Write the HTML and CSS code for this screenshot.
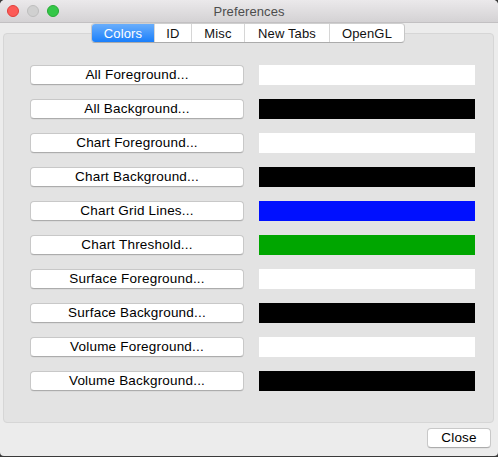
FILE: index.html
```html
<!DOCTYPE html>
<html>
<head>
<meta charset="utf-8">
<link rel="stylesheet" href="styles.css">
</head>
<body>
<div class="window">
  <div class="titlebar">
    <div class="lights">
      <span class="light red"></span>
      <span class="light gray"></span>
      <span class="light green"></span>
    </div>
    <div class="title">Preferences</div>
  </div>
  <div class="body">
    <div class="tabs">
      <span class="tab active">Colors</span>
      <span class="tab">ID</span>
      <span class="tab">Misc</span>
      <span class="tab">New Tabs</span>
      <span class="tab">OpenGL</span>
    </div>
    <div class="panel">
      <div class="row"><button class="btn">All Foreground...</button><div class="swatch white"></div></div>
      <div class="row"><button class="btn">All Background...</button><div class="swatch black"></div></div>
      <div class="row"><button class="btn">Chart Foreground...</button><div class="swatch white"></div></div>
      <div class="row"><button class="btn">Chart Background...</button><div class="swatch black"></div></div>
      <div class="row"><button class="btn">Chart Grid Lines...</button><div class="swatch blue"></div></div>
      <div class="row"><button class="btn">Chart Threshold...</button><div class="swatch green"></div></div>
      <div class="row"><button class="btn">Surface Foreground...</button><div class="swatch white"></div></div>
      <div class="row"><button class="btn">Surface Background...</button><div class="swatch black"></div></div>
      <div class="row"><button class="btn">Volume Foreground...</button><div class="swatch white"></div></div>
      <div class="row"><button class="btn">Volume Background...</button><div class="swatch black"></div></div>
    </div>
    <div class="footer">
      <button class="btn close">Close</button>
    </div>
  </div>
</div>
</body>
</html>
```

FILE: styles.css
```css
html, body {
  margin: 0;
  padding: 0;
  background: #3a3a3a;
}
body {
  width: 498px;
  height: 457px;
  overflow: hidden;
  font-family: "Liberation Sans", Arial, sans-serif;
  font-size: 13px;
  color: #000;
}
.window {
  width: 498px;
  height: 456px;
  background: #ececec;
  border-radius: 5px 5px 4px 4px;
  overflow: hidden;
  display: flex;
  flex-direction: column;
}
.titlebar {
  height: 22px;
  flex: none;
  display: flex;
  align-items: center;
  background: linear-gradient(#ebe9eb, #d4d2d4);
  border-bottom: 1px solid #c2c0c2;
}
.lights {
  display: flex;
  gap: 8px;
  padding-left: 7px;
  width: 70px;
}
.light {
  width: 12px;
  height: 12px;
  border-radius: 50%;
  box-sizing: border-box;
}
.light.red { background: #fc5b57; border: 1px solid #df3f3b; }
.light.gray { background: #d0d0d0; border: 1px solid #bdbdbd; }
.light.green { background: #34c748; border: 1px solid #27aa35; }
.title {
  flex: 1;
  text-align: center;
  color: #4d4d4d;
  font-size: 13px;
  letter-spacing: 0.1px;
  padding-right: 77px;
}
.body {
  flex: 1;
  display: flex;
  flex-direction: column;
  padding: 0 4px 0 3px;
}
.tabs {
  position: relative;
  z-index: 1;
  align-self: flex-start;
  margin-left: 88px;
  display: flex;
  height: 20px;
  background: #fff;
  border: 1px solid #c6c6c6;
  border-top-color: #cfcfcf;
  border-bottom-color: #ababab;
  border-radius: 4px;
  box-sizing: border-box;
  overflow: hidden;
}
.tab {
  display: flex;
  align-items: center;
  justify-content: center;
  border-left: 1px solid #d6d6d6;
  font-size: 13px;
  letter-spacing: 0.15px;
  color: #111;
  box-sizing: border-box;
}
.tab:first-child { border-left: none; }
.tab.active {
  background: linear-gradient(#6aaefb, #1a7ffb);
  color: #fff;
  width: 62px;
}
.tab:nth-child(2) { width: 37px; }
.tab:nth-child(3) { width: 53px; }
.tab:nth-child(4) { width: 85px; }
.tab:nth-child(5) { width: 75px; }
.panel {
  margin-top: -10px;
  height: 390px;
  box-sizing: border-box;
  background: #e3e3e3;
  border: 1px solid #d6d6d6;
  border-radius: 4px;
  padding: 31px 18px 0 26px;
  display: flex;
  flex-direction: column;
  gap: 14px;
}
.row {
  display: flex;
  align-items: center;
  gap: 15px;
  height: 20px;
}
.btn {
  font-family: "Liberation Sans", Arial, sans-serif;
  font-size: 13.5px;
  letter-spacing: 0.2px;
  color: #000;
  background: #fff;
  border: 1px solid #c8c8c8;
  border-bottom-color: #acacac;
  border-radius: 4px;
  height: 20px;
  padding: 0;
  box-sizing: border-box;
  line-height: 18px;
  box-shadow: 0 0.5px 0.5px rgba(0,0,0,0.08);
}
.row .btn {
  width: 214px;
}
.swatch {
  width: 216px;
  height: 20px;
}
.swatch.white { background: #ffffff; }
.swatch.black { background: #000000; }
.swatch.blue { background: #0010ff; }
.swatch.green { background: #00a600; }
.footer {
  display: flex;
  justify-content: flex-end;
  padding: 5px 3px 0 0;
}
.close {
  width: 64px;
}
```
